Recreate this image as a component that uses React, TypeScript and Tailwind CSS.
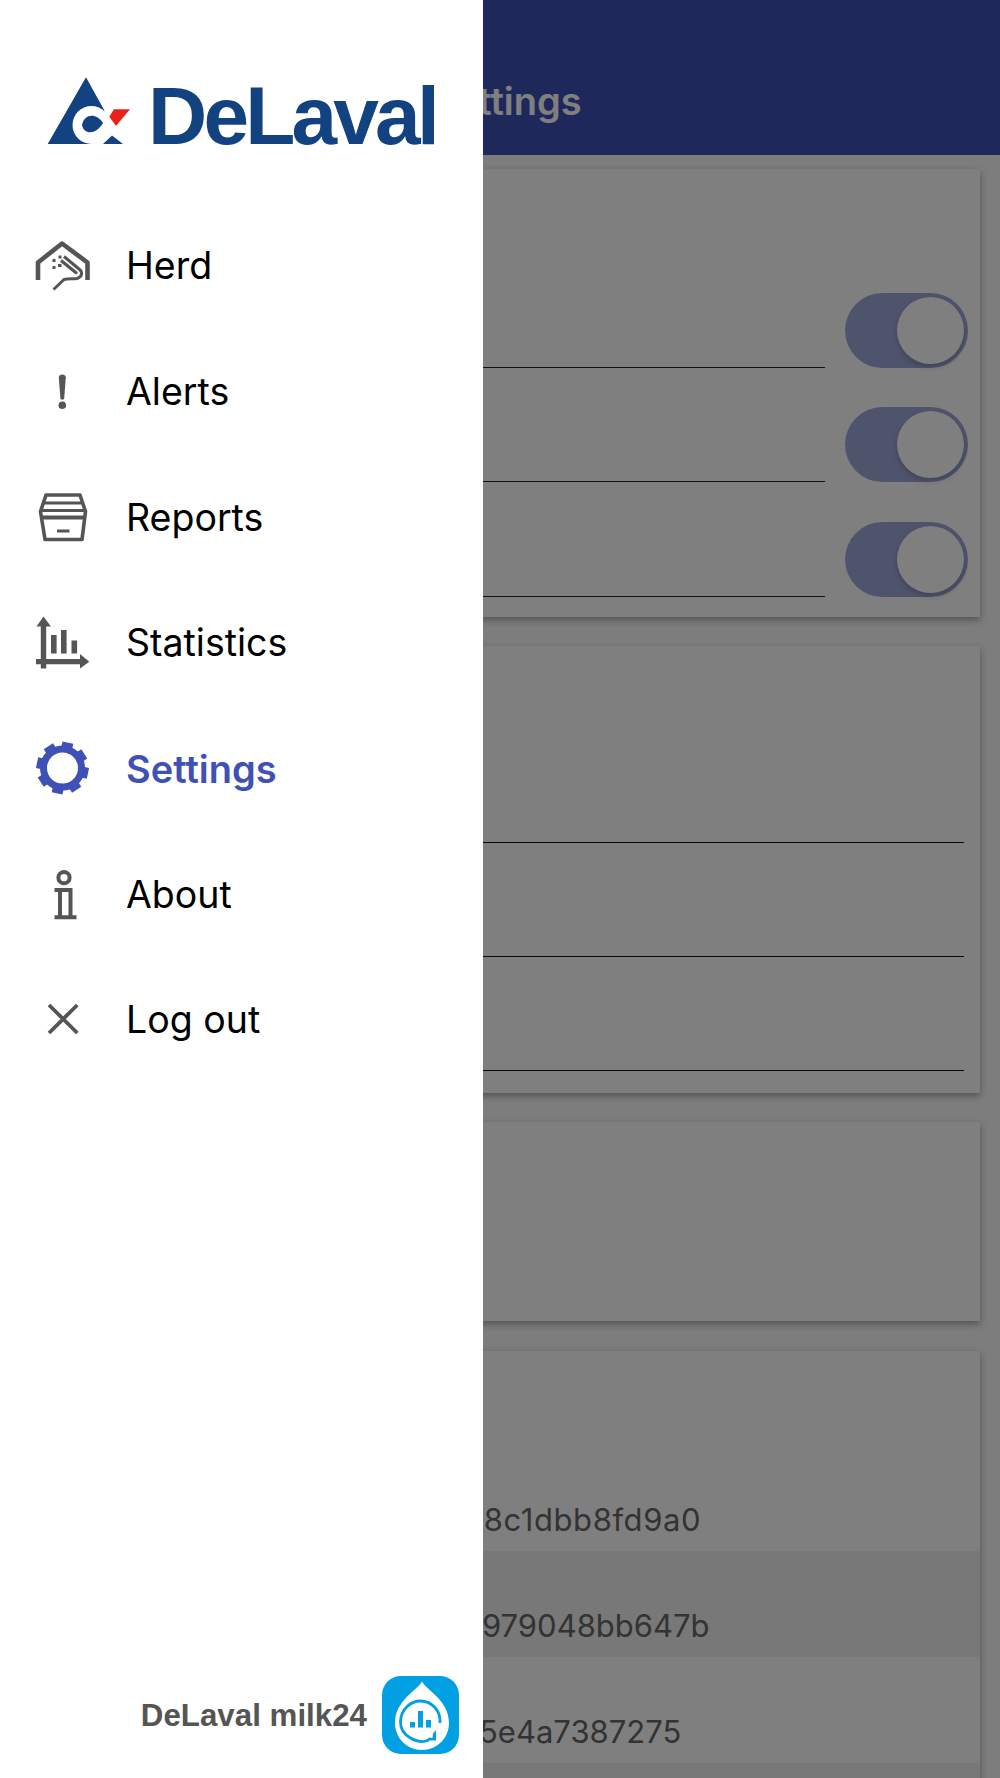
const iconGray = "#555555";

function HerdIcon() {
  return (
    <svg width="60" height="60" viewBox="0 0 60 60" fill="none" stroke={iconGray}>
      <path d="M5 44V26.5L29 7.5L54.5 26.5V44" strokeWidth="4.6" strokeLinejoin="round" />
      <path d="M20.5 53.5L31 43.5C35 42.5 40 43 44 42.5C49.5 41 50 36 46 33L31 20.5" strokeWidth="3" strokeLinejoin="round" />
      <path d="M28 24.5L44 37.5" strokeWidth="3.2" />
      <path d="M19.5 24.5h3M19.5 31.5h3M25 29.5h3.5M25.5 21h3" strokeWidth="3.2" />
    </svg>
  );
}

function AlertIcon() {
  return (
    <svg width="60" height="60" viewBox="0 0 60 60" fill={iconGray}>
      <path d="M25.8 15.5C25.8 11.5 32.8 11.5 32.8 15.5L31.2 36.5C31 38 27.6 38 27.4 36.5Z" />
      <circle cx="29.3" cy="43.3" r="3.8" />
    </svg>
  );
}

function ReportsIcon() {
  return (
    <svg width="60" height="60" viewBox="0 0 60 60" fill="none" stroke={iconGray} strokeWidth="3.6">
      <path d="M13 7H47L52.5 23.5L49 51.5H12L7.5 23.5Z" strokeLinejoin="round" />
      <path d="M7.5 29.5H52.5" strokeWidth="4" />
      <path d="M9 22.5H51M11 15H49" strokeWidth="3.2" />
      <path d="M24 43H36.5" strokeWidth="3" />
    </svg>
  );
}

function StatisticsIcon() {
  return (
    <svg width="60" height="60" viewBox="0 0 60 60" fill={iconGray}>
      <path d="M10.5 3.5L18 13.5H13.2V55.5H7.8V13.5H3.5Z" />
      <path d="M3 46H47V41L56.3 48.7L47 55.5V51.2H3Z" />
      <rect x="18" y="22" width="5.6" height="18.5" />
      <rect x="28" y="17" width="5.6" height="23.5" />
      <rect x="38.5" y="27.5" width="5.6" height="13" />
    </svg>
  );
}

function SettingsIcon() {
  const teeth = [12, 57, 102, 147, 192, 237, 282, 327];
  return (
    <svg width="60" height="60" viewBox="0 0 60 60" fill="#3f51b5">
      <circle cx="29.5" cy="29" r="19" fill="none" stroke="#3f51b5" strokeWidth="7" />
      {teeth.map((deg) => (
        <rect key={deg} x="24" y="3" width="11" height="8" transform={`rotate(${deg} 29.5 29)`} />
      ))}
    </svg>
  );
}

function AboutIcon() {
  return (
    <svg width="60" height="60" viewBox="0 0 60 60" fill="none" stroke={iconGray} strokeWidth="4">
      <circle cx="31" cy="12.7" r="5.6" />
      <path d="M21.5 25H37.5V52M27 25V52M21.5 52.3H43.5" />
    </svg>
  );
}

function LogoutIcon() {
  return (
    <svg width="60" height="60" viewBox="0 0 60 60" fill="none" stroke={iconGray} strokeWidth="3.8">
      <path d="M16 15L44.3 43M44.3 15L16 43" />
    </svg>
  );
}

function DeLavalMark() {
  return (
    <svg width="84" height="68" viewBox="47 77 84 68" className="shrink-0">
      <path d="M86 77.3L47.7 144H123Z" fill="#134281" />
      <path d="M105 109L131 109V140L123 144.5H112L100 131Z" fill="#ffffff" />
      <circle cx="91.5" cy="125" r="19" fill="#ffffff" />
      <path d="M100 128L122 149H90Z" fill="#ffffff" />
      <path d="M82 125C84 114 96 112 103 123C96 135 84 135 82 125Z" fill="#134281" />
      <path d="M114 109.3H130L116 126L109.3 116.7Z" fill="#e8211d" />
      <path d="M103 144L112 135.5L123 144Z" fill="#134281" />
    </svg>
  );
}

function Milk24Icon() {
  return (
    <svg width="77" height="78" viewBox="0 0 77 78">
      <rect width="77" height="78" rx="19" fill="#00a0e3" />
      <path d="M40 5.5C44 14 67 24 67 47C67 62 55 74 40 74C25 74 13 62 13 47C13 24 36 14 40 5.5Z" fill="#ffffff" />
      <path d="M47 64C36 69 18 60 18.5 45.5C19 33 29 25 38.5 25C50 25 59 35 58 47" fill="none" stroke="#00a0e3" strokeWidth="2.8" />
      <rect x="28" y="46" width="5" height="5.5" fill="#00a0e3" />
      <rect x="36" y="35" width="5" height="16.5" fill="#00a0e3" />
      <rect x="44" y="44" width="5" height="7.5" fill="#00a0e3" />
      <path d="M54 54V64.5H44L47 61.5L50.5 62L51 57.5Z" fill="#00a0e3" />
    </svg>
  );
}

const navItems = [
  { label: "Herd", icon: <HerdIcon /> },
  { label: "Alerts", icon: <AlertIcon /> },
  { label: "Reports", icon: <ReportsIcon /> },
  { label: "Statistics", icon: <StatisticsIcon /> },
  { label: "Settings", icon: <SettingsIcon />, active: true },
  { label: "About", icon: <AboutIcon /> },
  { label: "Log out", icon: <LogoutIcon /> },
];

function Toggle() {
  return (
    <div className="flex h-[75px] w-[123px] shrink-0 items-center justify-end rounded-full bg-[#9fa8da] pr-[4px]">
      <div className="h-[67px] w-[67px] rounded-full bg-white shadow-[0_3px_6px_rgba(0,0,0,0.2)]" />
    </div>
  );
}

function ToggleRow() {
  return (
    <div className="flex h-[114.5px] items-end pr-[12px]">
      <div className="h-full flex-1 border-b border-[#222]" />
      <div className="ml-[20px]">
        <Toggle />
      </div>
    </div>
  );
}

function PlainRow() {
  return <div className="h-[114px] border-b border-[#111]" />;
}

const cardClass = "bg-white shadow-[0_3px_7px_rgba(0,0,0,0.34)]";

export default function App() {
  return (
    <div className="relative h-[1778px] w-[1000px] overflow-hidden bg-[#fafafa] font-['Inter','Liberation_Sans',sans-serif]">
      <header className="flex h-[155px] items-end bg-[#3f51b5] pb-[32px] pl-[431px]">
        <h1 className="text-[38px] leading-[44px] font-semibold text-white">Settings</h1>
      </header>

      <main className="flex flex-col pt-[14px] pr-[20px] pl-[27px]">
        <section className={`${cardClass} h-[448px] pt-[84px]`}>
          <ToggleRow />
          <ToggleRow />
          <ToggleRow />
        </section>

        <section className={`${cardClass} mt-[29px] h-[447px] pt-[83px] pr-[16px]`}>
          <PlainRow />
          <PlainRow />
          <PlainRow />
        </section>

        <section className={`${cardClass} mt-[29px] h-[199px]`} />

        <section className={`${cardClass} mt-[30px] h-[460px] pt-[94px] text-[31px] text-[#666]`}>
          <div className="flex h-[106px] items-center pt-[44px] pl-[438px] tracking-[0.6px]">e8c1dbb8fd9a0</div>
          <div className="flex h-[106px] items-center bg-[#f0f0f0] pt-[44px] pl-[455px]">979048bb647b</div>
          <div className="flex h-[106px] items-center pt-[44px] pl-[452px]">5e4a7387275</div>
          <div className="h-[106px] bg-[#f0f0f0]" />
        </section>
      </main>

      <div className="absolute inset-0 bg-black/50" />

      <aside className="absolute top-0 bottom-0 left-0 flex w-[483px] flex-col bg-white">
        <div className="flex h-[145px] items-end pl-[47px]">
          <DeLavalMark />
          <span className="ml-[17px] font-['Liberation_Sans',sans-serif] text-[82px] leading-[59px] font-bold tracking-[-3.8px] text-[#134281] [font-kerning:none]">
            DeLaval
          </span>
        </div>

        <nav className="mt-[58px] flex flex-col">
          {navItems.map((item) => (
            <div key={item.label} className="flex h-[125.7px] items-center gap-[33px] pl-[33px] pt-[1px]">
              {item.icon}
              <span className={item.active ? "text-[38px] leading-[44px] font-semibold text-[#3f51b5]" : "text-[37.5px] leading-[44px] text-black"}>
                {item.label}
              </span>
            </div>
          ))}
        </nav>

        <div className="mt-auto flex items-center justify-end gap-[15px] pr-[24px] pb-[24px]">
          <span className="pt-[3px] font-['Liberation_Sans',sans-serif] text-[31.3px] font-bold text-[#555]">DeLaval milk24</span>
          <Milk24Icon />
        </div>
      </aside>
    </div>
  );
}
